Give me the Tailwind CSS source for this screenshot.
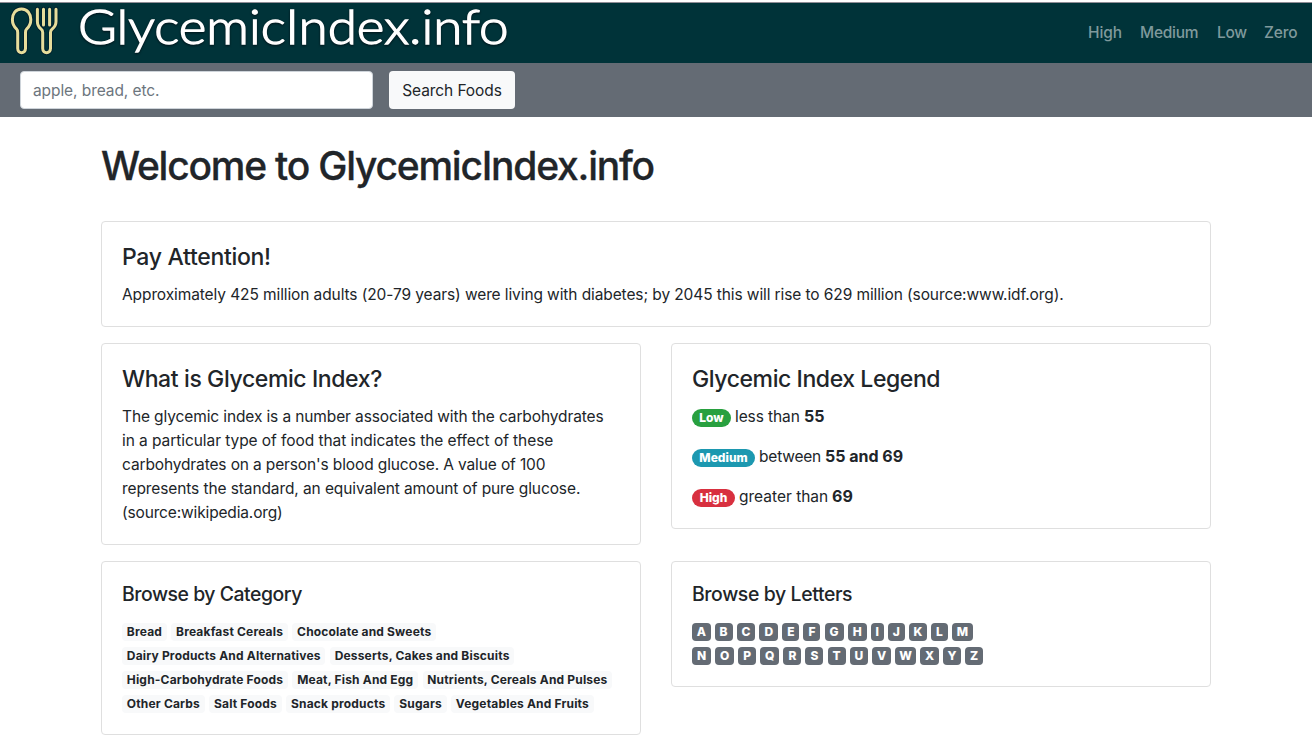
<!DOCTYPE html>
<html lang="en">
<head>
<meta charset="utf-8">
<title>GlycemicIndex.info</title>
<script src="https://cdn.jsdelivr.net/npm/@tailwindcss/browser@4"></script>
</head>
<body class="h-[744px] overflow-hidden bg-white font-['Inter','Liberation_Sans',sans-serif] text-[15.5px] leading-6 text-[#212529]">
<header class="mt-[2px] flex h-[61px] items-center justify-between border-t border-[#8f8d96] bg-[#003339] pr-[14px]">
  <a class="flex items-center">
    <svg class="block overflow-visible" width="520" height="60" viewBox="0 3 520 60" aria-label="GlycemicIndex.info">
      <g fill="none" stroke-linecap="round" stroke-linejoin="round">
        <g stroke="#00222e" stroke-width="5">
          <path d="M21.5 9C15.5 9 12.4 14 12.4 19.5C12.4 24 14.4 27 16.4 28.8C17.4 29.8 17.7 30.8 17.7 32.4V48.6C17.7 54 25.5 54 25.5 48.6V32.4C25.5 30.8 25.8 29.8 26.8 28.8C28.8 27 30.8 24 30.8 19.5C30.8 14 27.5 9 21.5 9Z"/>
          <path d="M37.4 9.2V21.6C37.4 25.2 38.8 27.4 41 29C42.2 29.8 42.7 30.8 42.7 32.4V48.6C42.7 54 50.5 54 50.5 48.6V32.4C50.5 30.8 51 29.8 52.2 29C54.4 27.4 56 25.2 56 21.6V9.2M43.5 9.2V25M49.6 9.2V25"/>
        </g>
        <g stroke="#e7dd9b" stroke-width="3">
          <path d="M21.5 9C15.5 9 12.4 14 12.4 19.5C12.4 24 14.4 27 16.4 28.8C17.4 29.8 17.7 30.8 17.7 32.4V48.6C17.7 54 25.5 54 25.5 48.6V32.4C25.5 30.8 25.8 29.8 26.8 28.8C28.8 27 30.8 24 30.8 19.5C30.8 14 27.5 9 21.5 9Z"/>
          <path d="M37.4 9.2V21.6C37.4 25.2 38.8 27.4 41 29C42.2 29.8 42.7 30.8 42.7 32.4V48.6C42.7 54 50.5 54 50.5 48.6V32.4C50.5 30.8 51 29.8 52.2 29C54.4 27.4 56 25.2 56 21.6V9.2M43.5 9.2V25M49.6 9.2V25"/>
        </g>
      </g>
      <text x="78" y="44" textLength="430.5" lengthAdjust="spacingAndGlyphs" class="fill-white stroke-white font-['Lato',sans-serif] text-[47px] font-light [stroke-width:1.3px] [filter:drop-shadow(0_1px_1px_#001218)]">GlycemicIndex.info</text>
    </svg>
  </a>
  <nav class="flex gap-[18px] font-medium text-[#7f999c]">
    <a class="w-[34px] whitespace-nowrap tracking-[-0.1px]">High</a>
    <a class="w-[59px] whitespace-nowrap tracking-[-0.25px]">Medium</a>
    <a class="w-[29px] whitespace-nowrap tracking-[-0.35px]">Low</a>
    <a class="w-[34px] whitespace-nowrap tracking-[-0.15px]">Zero</a>
  </nav>
</header>
<form class="flex h-[54px] items-center gap-4 bg-[#646b74] px-5">
  <input class="h-[38px] w-[353px] rounded border border-[#ced4da] bg-white px-3 tracking-[-0.08px] placeholder:text-[#6c757d] placeholder:opacity-100" type="text" placeholder="apple, bread, etc.">
  <button type="button" class="h-[38px] w-[126px] rounded bg-[#f8f9fa] pt-[2px] tracking-[-0.08px] whitespace-nowrap">Search Foods</button>
</form>
<main class="mx-auto w-[1110px] pt-[25px]">
  <h1 class="text-[39px] leading-[48px] font-medium tracking-[-1.23px] whitespace-nowrap [-webkit-text-stroke:0.3px]">Welcome to GlycemicIndex.info</h1>
  <section class="mt-[31px] h-[106px] rounded border border-[#dfdfdf] px-5 pt-[21px]">
    <h2 class="mb-[11px] text-[23px] leading-[29px] font-medium tracking-[-0.3px]">Pay Attention!</h2>
    <p class="tracking-[-0.1px] whitespace-nowrap">Approximately 425 million adults (20-79 years) were living with diabetes; by 2045 this will rise to 629 million (source:www.idf.org).</p>
  </section>
  <div class="mt-4 grid grid-cols-2 items-start gap-x-[30px] gap-y-4">
    <section class="h-[202px] rounded border border-[#dfdfdf] px-5 pt-[21px]">
      <h2 class="mb-[11px] text-[23px] leading-[29px] font-medium tracking-[-0.39px]">What is Glycemic Index?</h2>
      <p class="whitespace-nowrap">
        <span class="block tracking-[-0.115px]">The glycemic index is a number associated with the carbohydrates</span>
        <span class="block tracking-[-0.065px]">in a particular type of food that indicates the effect of these</span>
        <span class="block tracking-[-0.13px]">carbohydrates on a person's blood glucose. A value of 100</span>
        <span class="block tracking-[-0.1px]">represents the standard, an equivalent amount of pure glucose.</span>
        <span class="block tracking-[-0.15px]">(source:wikipedia.org)</span>
      </p>
    </section>
    <section class="h-[186px] rounded border border-[#dfdfdf] px-5 pt-[21px]">
      <h2 class="mb-[10px] text-[23px] leading-[29px] font-medium tracking-[-0.42px]">Glycemic Index Legend</h2>
      <div class="space-y-4 whitespace-nowrap">
        <p class="flex h-6 items-baseline"><span class="mr-1 h-[18px] w-[39px] rounded-full bg-[#28a03f] py-[3px] text-center text-xs leading-3 font-extrabold text-white">Low</span><span class="w-[69px] tracking-[-0.1px]">less than</span><b class="text-base font-bold">55</b></p>
        <p class="flex h-6 items-baseline"><span class="mr-1 h-[18px] w-[63px] rounded-full bg-[#1c98b0] py-[3px] text-center text-xs leading-3 font-extrabold text-white">Medium</span><span class="w-[66px] tracking-[-0.2px]">between</span><b class="text-base font-bold">55 and 69</b></p>
        <p class="flex h-6 items-baseline"><span class="mr-1 h-[18px] w-[43px] rounded-full bg-[#d8303f] py-[3px] text-center text-xs leading-3 font-extrabold text-white">High</span><span class="w-[93px]">greater than</span><b class="text-base font-bold">69</b></p>
      </div>
    </section>
    <section class="h-[174px] rounded border border-[#dfdfdf] p-5">
      <h3 class="mb-3 text-[19.4px] leading-6 font-medium tracking-[-0.45px]">Browse by Category</h3>
      <div class="space-y-1.5 pt-[5px] text-xs leading-3 font-bold tracking-[0.18px] whitespace-nowrap text-[#212529] *:flex *:gap-[4.4px] [&_a]:rounded [&_a]:bg-[#f8f9fa] [&_a]:px-[4.8px] [&_a]:py-[3px]">
        <div><a>Bread</a><a>Breakfast Cereals</a><a>Chocolate and Sweets</a></div>
        <div><a>Dairy Products And Alternatives</a><a>Desserts, Cakes and Biscuits</a></div>
        <div><a>High-Carbohydrate Foods</a><a>Meat, Fish And Egg</a><a>Nutrients, Cereals And Pulses</a></div>
        <div><a>Other Carbs</a><a>Salt Foods</a><a>Snack products</a><a>Sugars</a><a>Vegetables And Fruits</a></div>
      </div>
    </section>
    <section class="h-[126px] rounded border border-[#dfdfdf] p-5">
      <h3 class="mb-3 text-[19.4px] leading-6 font-medium tracking-[-0.37px]">Browse by Letters</h3>
      <div class="space-y-1.5 pt-[5px] text-center text-xs leading-3 font-extrabold text-white *:flex *:gap-[4.1px] [&_a]:rounded [&_a]:bg-[#646b74] [&_a]:py-[3px]">
        <div><a class="w-[18.5px]">A</a><a class="w-[18px]">B</a><a class="w-[18.5px]">C</a><a class="w-[19px]">D</a><a class="w-[17px]">E</a><a class="w-[17px]">F</a><a class="w-[19px]">G</a><a class="w-[19px]">H</a><a class="w-[13px]">I</a><a class="w-[17px]">J</a><a class="w-[18px]">K</a><a class="w-[16.5px]">L</a><a class="w-[21.5px]">M</a></div>
        <div><a class="w-[19px]">N</a><a class="w-[19px]">O</a><a class="w-[18px]">P</a><a class="w-[19px]">Q</a><a class="w-[18px]">R</a><a class="w-[18px]">S</a><a class="w-[18px]">T</a><a class="w-[18.5px]">U</a><a class="w-[18.5px]">V</a><a class="w-[21.5px]">W</a><a class="w-[18.5px]">X</a><a class="w-[18px]">Y</a><a class="w-[18px]">Z</a></div>
      </div>
    </section>
  </div>
</main>
</body>
</html>
